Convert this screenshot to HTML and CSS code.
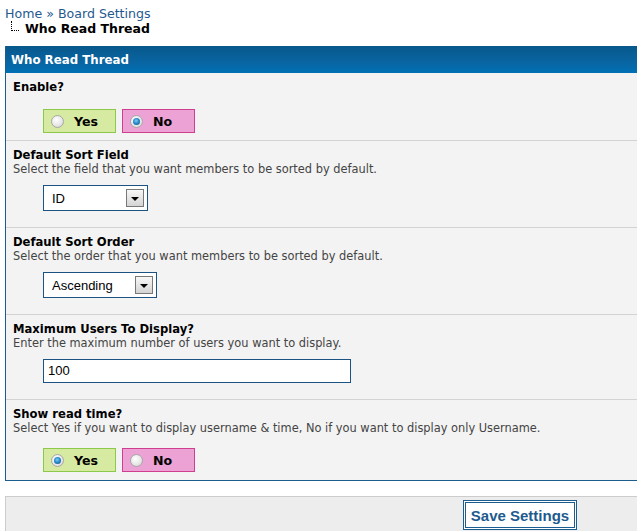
FILE: index.html
```html
<!DOCTYPE html>
<html>
<head>
<meta charset="utf-8">
<link rel="stylesheet" href="styles.css">
</head>
<body>
<div class="page">
  <div class="crumbs">
    <div class="crumb-top"><a href="#">Home</a> » <a href="#">Board Settings</a></div>
    <div class="crumb-current"><span class="tree"></span><strong>Who Read Thread</strong></div>
  </div>

  <div class="panel">
    <div class="panel-head">Who Read Thread</div>

    <div class="row">
      <div class="row-title">Enable?</div>
      <div class="radio-group first">
        <label class="opt opt-yes"><span class="radio"></span>Yes</label>
        <label class="opt opt-no"><span class="radio checked"></span>No</label>
      </div>
    </div>

    <div class="row">
      <div class="row-title">Default Sort Field</div>
      <div class="row-desc">Select the field that you want members to be sorted by default.</div>
      <div class="select sel-id"><span class="sel-text">ID</span><span class="sel-btn"><span class="tri"></span></span></div>
    </div>

    <div class="row">
      <div class="row-title">Default Sort Order</div>
      <div class="row-desc">Select the order that you want members to be sorted by default.</div>
      <div class="select sel-order"><span class="sel-text">Ascending</span><span class="sel-btn"><span class="tri"></span></span></div>
    </div>

    <div class="row">
      <div class="row-title">Maximum Users To Display?</div>
      <div class="row-desc">Enter the maximum number of users you want to display.</div>
      <div class="textbox">100</div>
    </div>

    <div class="row last">
      <div class="row-title">Show read time?</div>
      <div class="row-desc">Select Yes if you want to display username &amp; time, No if you want to display only Username.</div>
      <div class="radio-group">
        <label class="opt opt-yes"><span class="radio checked"></span>Yes</label>
        <label class="opt opt-no"><span class="radio"></span>No</label>
      </div>
    </div>
  </div>

  <div class="footer">
    <button class="save">Save Settings</button>
  </div>
</div>
</body>
</html>
```

FILE: styles.css
```css
html, body {
  margin: 0;
  padding: 0;
  overflow: hidden;
  background: #ffffff;
}

body {
  font-family: "DejaVu Sans", Verdana, sans-serif;
  color: #000;
}

.page {
  width: 1030px;
  padding: 6px 5px 0 5px;
}

.crumbs {
  font-size: 12.6px;
  line-height: 15px;
}

.crumb-top a {
  color: #1f5a8f;
  text-decoration: none;
}

.crumb-top {
  color: #1f5a8f;
}

.crumb-current {
  display: flex;
  align-items: flex-start;
  font-size: 12.5px;
  line-height: 15px;
}

.tree {
  width: 8px;
  height: 10px;
  margin: 0 6px 0 6px;
  border-left: 1px dotted #000;
  border-bottom: 1px dotted #000;
  box-sizing: border-box;
}

.crumb-current strong {
  font-weight: bold;
  color: #000;
}

.panel {
  margin-top: 10px;
  border-left: 1px solid #1b5d8e;
  border-bottom: 1px solid #1b5d8e;
}

.panel-head {
  height: 27px;
  line-height: 28px;
  padding-left: 5px;
  color: #fff;
  font-weight: bold;
  font-size: 11.8px;
  background: linear-gradient(to bottom, #07588b 0%, #0a65a2 60%, #0070b5 100%);
}

.row {
  background: #f3f3f3;
  padding: 7px 7px 0 7px;
  border-bottom: 1px solid #d3d3d3;
}

.row.last {
  border-bottom: none;
}

.row-title {
  font-size: 11.6px;
  font-weight: bold;
  line-height: 14px;
}

.row-desc {
  font-size: 11.4px;
  line-height: 14px;
  color: #444;
}

.radio-group {
  display: flex;
  gap: 6px;
  margin: 13px 0 0 30px;
  padding-bottom: 8px;
}

.radio-group.first {
  margin-top: 15px;
  padding-bottom: 7px;
}

.opt {
  display: flex;
  align-items: center;
  box-sizing: border-box;
  width: 73px;
  height: 24px;
  padding-left: 7px;
  font-size: 12.6px;
  font-weight: bold;
}

.opt-yes {
  background: #d7eaa1;
  border: 1px solid #8cc84a;
}

.opt-no {
  background: #eca2d4;
  border: 1px solid #cf3f8e;
}

.radio {
  width: 13px;
  height: 13px;
  box-sizing: border-box;
  border-radius: 50%;
  border: 1px solid #a8a8a8;
  background: radial-gradient(circle at 40% 35%, #ffffff 0%, #e8e8e8 55%, #cfcfcf 100%);
  margin-right: 10px;
  position: relative;
}

.radio.checked::after {
  content: "";
  position: absolute;
  left: 2px;
  top: 2px;
  width: 7px;
  height: 7px;
  border-radius: 50%;
  background: radial-gradient(circle at 45% 40%, #7fd0f5 0%, #2a8ccc 45%, #0d4a7a 100%);
}

.select {
  display: flex;
  align-items: center;
  box-sizing: border-box;
  height: 26px;
  margin: 9px 0 0 30px;
  background: #fff;
  border: 1px solid #1b5484;
  font-family: "Liberation Sans", Arial, sans-serif;
  font-size: 13px;
  padding-left: 8px;
  padding-right: 3px;
}

.sel-id {
  width: 105px;
  margin-bottom: 16px;
}

.sel-order {
  width: 114px;
  margin-bottom: 16px;
}

.sel-text {
  flex: 1;
}

.sel-btn {
  width: 18px;
  height: 18px;
  box-sizing: border-box;
  border: 1px solid #787878;
  background: linear-gradient(to bottom, #f7f7f7 0%, #e6e6e6 50%, #d4d4d4 100%);
  display: flex;
  align-items: center;
  justify-content: center;
}

.tri {
  width: 0;
  height: 0;
  border-left: 4px solid transparent;
  border-right: 4px solid transparent;
  border-top: 4px solid #000;
  margin-top: 2px;
}

.textbox {
  box-sizing: border-box;
  width: 308px;
  height: 24px;
  line-height: 22px;
  margin: 9px 0 16px 30px;
  background: #fff;
  border: 1px solid #1b5484;
  font-family: "Liberation Sans", Arial, sans-serif;
  font-size: 13px;
  padding-left: 4px;
}

.footer {
  margin-top: 15px;
  background: #ededed;
  border: 1px solid #cccccc;
  padding: 3px 0 6px 0;
  display: flex;
  justify-content: center;
}

.save {
  width: 114px;
  height: 30px;
  background: #fff;
  border: 3px double #1b5d8e;
  color: #1d5b8e;
  font-family: "Liberation Sans", Arial, sans-serif;
  font-weight: bold;
  font-size: 15px;
  padding: 0;
}
```
